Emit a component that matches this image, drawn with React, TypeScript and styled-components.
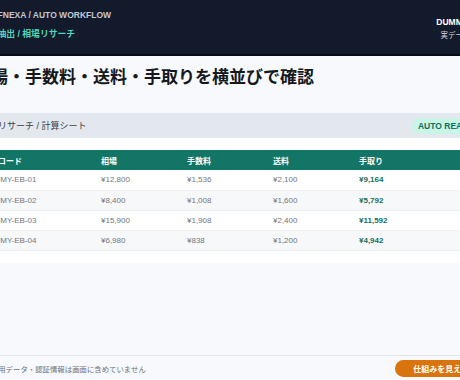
import React from 'react'
import styled, { createGlobalStyle } from 'styled-components'

const GlobalStyle = createGlobalStyle`
  html, body {
    margin: 0;
    padding: 0;
    overflow: hidden;
    background: #f7f9fc;
  }
  * { box-sizing: border-box; }
`

const FONT = `"Liberation Sans", "Noto Sans CJK JP", sans-serif`

const Viewport = styled.div`
  width: 100vw;
  height: 100vh;
  display: flex;
  justify-content: center;
  overflow: hidden;
  font-family: ${FONT};
`

const Page = styled.div`
  flex-shrink: 0;
  width: 560px;
  height: 100%;
  display: flex;
  flex-direction: column;
`

const Header = styled.header`
  height: 56px;
  padding: 9px 17px 0 23px;
  background: #121a2c;
  border-bottom: 2px solid #070b14;
  display: flex;
  justify-content: space-between;
  align-items: flex-start;
`

const Brand = styled.div`
  font-size: 8.5px;
  font-weight: 700;
  line-height: 12px;
  color: #c3c8d1;
`

const Crumb = styled.div`
  margin-top: 7px;
  margin-left: -2px;
  font-size: 8.8px;
  font-weight: 700;
  line-height: 12px;
  color: #52d6b9;
`

const Status = styled.div`
  padding-top: 7px;
  display: flex;
  flex-direction: column;
  align-items: flex-end;
`

const Dummy = styled.div`
  font-size: 8.5px;
  font-weight: 700;
  line-height: 12px;
  color: #ffffff;
`

const Note = styled.div`
  margin-top: 3px;
  font-size: 7.5px;
  line-height: 10px;
  color: #c9ced8;
`

const Main = styled.main`
  flex: 1;
  padding: 0 24px;
`

const Title = styled.h1`
  margin: 9px 0 0;
  font-size: 17px;
  line-height: 25px;
  font-weight: 700;
  color: #15181d;
`

const Card = styled.section`
  margin-top: 23px;
  background: #ffffff;
  padding-bottom: 12px;
`

const Bar = styled.div`
  height: 25px;
  padding: 0 6px;
  background: #e3e8ef;
  display: flex;
  align-items: center;
  justify-content: space-between;
`

const BarTitle = styled.div`
  font-size: 9px;
  color: #3a3f47;
`

const Badge = styled.span`
  padding: 3px 6px;
  border-radius: 10px;
  background: #c9f5e6;
  color: #0f6f60;
  font-size: 8.5px;
  font-weight: 700;
`

const Table = styled.table`
  margin-top: 12px;
  width: 100%;
  table-layout: fixed;
  border-collapse: collapse;
`

const HeadCell = styled.th`
  height: 20px;
  padding: 0 8px;
  background: #127566;
  color: #ffffff;
  font-size: 8px;
  font-weight: 700;
  text-align: left;
`

const Row = styled.tr<{ $striped: boolean }>`
  background: ${(p) => (p.$striped ? '#f6f8fa' : '#ffffff')};
  border-bottom: 1px solid #eef1f4;
`

const Cell = styled.td<{ $strong?: boolean }>`
  height: 20px;
  padding: 0 8px;
  font-size: 8px;
  color: ${(p) => (p.$strong ? '#16705e' : '#72767d')};
  font-weight: ${(p) => (p.$strong ? 700 : 400)};
  white-space: nowrap;
`

const Footer = styled.footer`
  height: 25px;
  padding: 0 15px 0 24px;
  border-top: 1px solid #e3e7ec;
  display: flex;
  align-items: center;
  justify-content: space-between;
`

const FooterNote = styled.span`
  font-size: 7.4px;
  color: #6d7179;
`

const Button = styled.button`
  height: 17px;
  padding: 0 18px;
  border: none;
  border-radius: 9px;
  background: #d9730c;
  color: #ffffff;
  font-family: ${FONT};
  font-size: 8px;
  font-weight: 700;
`

const rows = [
  { code: 'DUMMY-EB-01', price: '¥12,800', fee: '¥1,536', ship: '¥2,100', net: '¥9,164' },
  { code: 'DUMMY-EB-02', price: '¥8,400', fee: '¥1,008', ship: '¥1,600', net: '¥5,792' },
  { code: 'DUMMY-EB-03', price: '¥15,900', fee: '¥1,908', ship: '¥2,400', net: '¥11,592' },
  { code: 'DUMMY-EB-04', price: '¥6,980', fee: '¥838', ship: '¥1,200', net: '¥4,942' },
]

export default function App() {
  return (
    <Viewport>
      <GlobalStyle />
      <Page>
        <Header>
          <div>
            <Brand>DONEFNEXA / AUTO WORKFLOW</Brand>
            <Crumb>データ抽出 / 相場リサーチ</Crumb>
          </div>
          <Status>
            <Dummy>DUMMY DATA</Dummy>
            <Note>実データ未使用</Note>
          </Status>
        </Header>
        <Main>
          <Title>相場・手数料・送料・手取りを横並びで確認</Title>
          <Card>
            <Bar>
              <BarTitle>相場リサーチ / 計算シート</BarTitle>
              <Badge>AUTO READY</Badge>
            </Bar>
            <Table>
              <colgroup>
                <col style={{ width: 119 }} />
                <col style={{ width: 86 }} />
                <col style={{ width: 86 }} />
                <col style={{ width: 86 }} />
                <col />
              </colgroup>
              <thead>
                <tr>
                  <HeadCell>商品コード</HeadCell>
                  <HeadCell>相場</HeadCell>
                  <HeadCell>手数料</HeadCell>
                  <HeadCell>送料</HeadCell>
                  <HeadCell>手取り</HeadCell>
                </tr>
              </thead>
              <tbody>
                {rows.map((r, i) => (
                  <Row key={r.code} $striped={i % 2 === 1}>
                    <Cell>{r.code}</Cell>
                    <Cell>{r.price}</Cell>
                    <Cell>{r.fee}</Cell>
                    <Cell>{r.ship}</Cell>
                    <Cell $strong>{r.net}</Cell>
                  </Row>
                ))}
              </tbody>
            </Table>
          </Card>
        </Main>
        <Footer>
          <FooterNote>※ 実運用データ・認証情報は画面に含めていません</FooterNote>
          <Button>仕組みを見える化</Button>
        </Footer>
      </Page>
    </Viewport>
  )
}
